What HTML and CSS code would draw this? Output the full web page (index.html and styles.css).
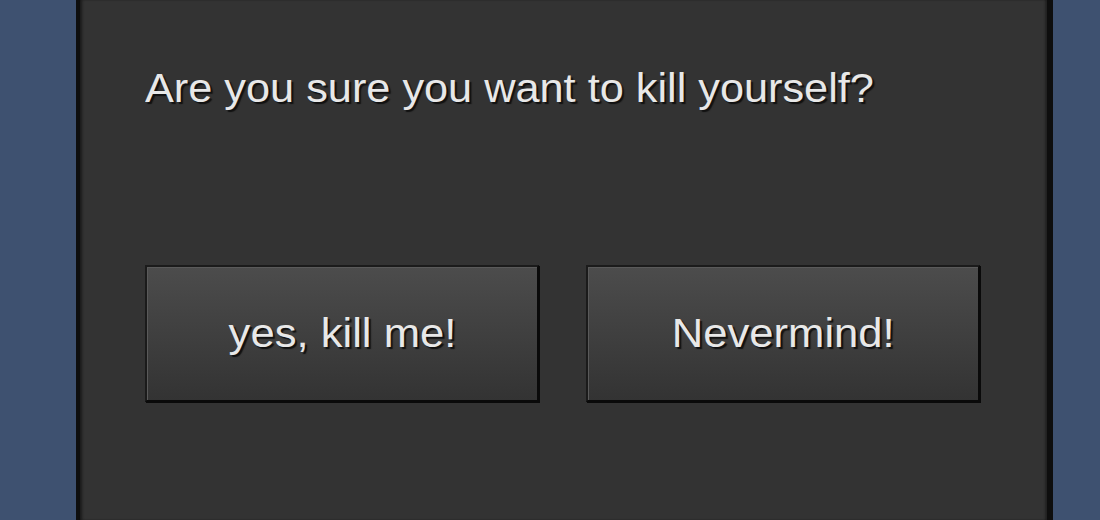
FILE: index.html
```html
<!DOCTYPE html>
<html>
<head>
<meta charset="utf-8">
<link rel="stylesheet" href="styles.css">
</head>
<body>
<div class="panel">
  <p class="question"><span class="wide">Are you sure you want to kill yourself?</span></p>
  <div class="buttons">
    <button class="btn"><span class="wide-c">yes, kill me!</span></button>
    <button class="btn"><span class="wide-c">Nevermind!</span></button>
  </div>
</div>
</body>
</html>
```
FILE: styles.css
```css
html, body {
  margin: 0;
  padding: 0;
  height: 100%;
}
body {
  background: #3e5170;
  font-family: "Liberation Sans", Arial, sans-serif;
  overflow: hidden;
}
.panel {
  box-sizing: border-box;
  margin-left: 76px;
  width: 977px;
  height: 520px;
  background: #333333;
  border-left: 4px solid #0e0e0e;
  border-right: 6px solid #0e0e0e;
  box-shadow: inset 3px 0 3px -1px #1a1a1a, inset -3px 0 2px -1px #222;
  padding: 64px 0 0 65px;
}
.question {
  margin: 0;
  font-size: 40px;
  line-height: 48px;
  color: #e8e8e8;
  text-shadow: 2px 2px 1px #111;
}
.wide {
  display: inline-block;
  transform: scaleX(1.082);
  transform-origin: left center;
}
.buttons {
  display: flex;
  gap: 47px;
  margin-top: 153px;
}
.btn {
  box-sizing: border-box;
  width: 394px;
  height: 137px;
  border: 2px solid #1b1b1b;
  border-right-color: #0a0a0a;
  border-bottom-color: #0a0a0a;
  box-shadow: 1px 1px 0 #0a0a0a, inset 1px 1px 0 #5a5a5a;
  background: linear-gradient(#4c4c4c, #333333);
  color: #e8e8e8;
  font-family: "Liberation Sans", Arial, sans-serif;
  font-size: 40px;
  text-shadow: 2px 2px 1px #111;
  padding: 0;
  cursor: pointer;
}
.wide-c {
  display: inline-block;
  transform: scaleX(1.09);
  transform-origin: center center;
}
```
